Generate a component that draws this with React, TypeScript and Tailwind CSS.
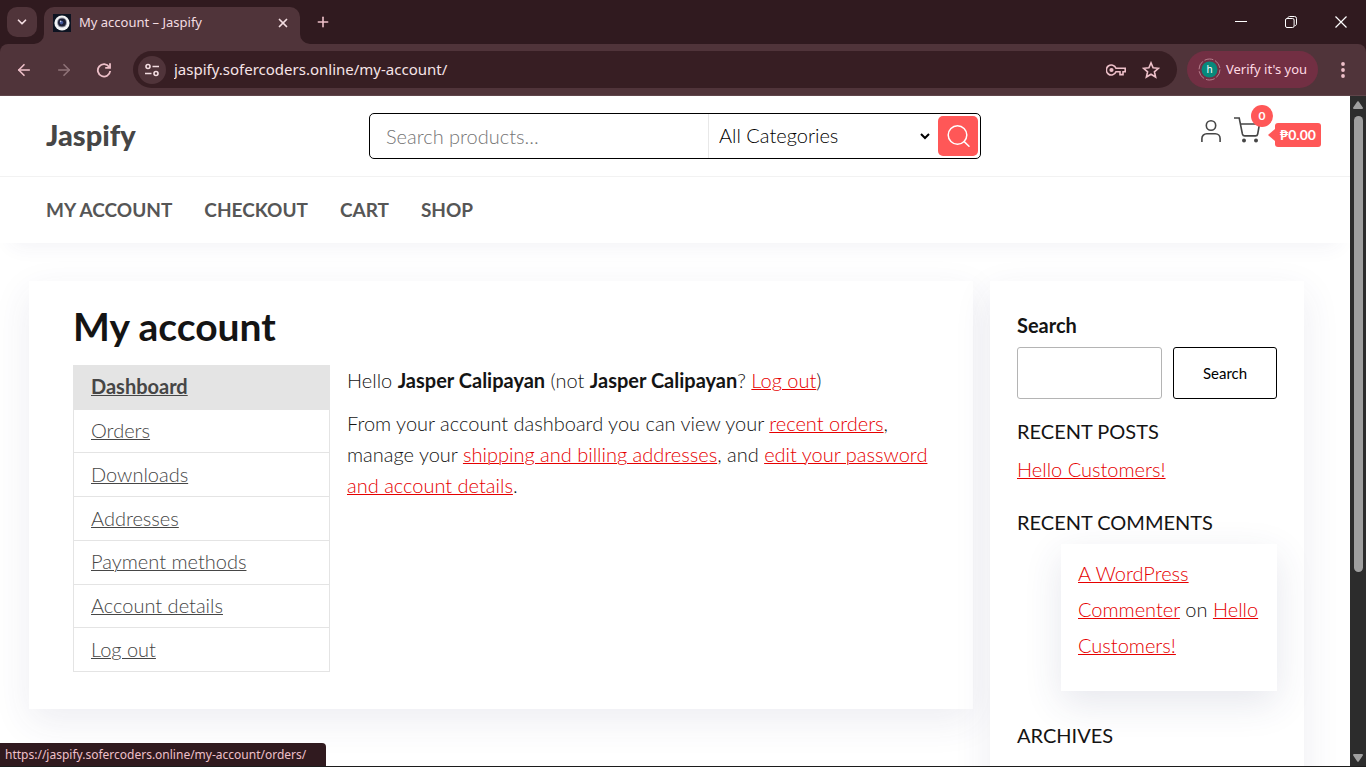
import { useState } from "react";
import { ArrowLeft, ArrowRight, ChevronDown, Plus, X } from "lucide-react";

const menu = ["My account", "Checkout", "Cart", "Shop"];

const accountLinks = [
  "Dashboard",
  "Orders",
  "Downloads",
  "Addresses",
  "Payment methods",
  "Account details",
  "Log out",
];

function TextLink({ children }: { children: string }) {
  return (
    <a href="#" className="text-[#e60000] underline decoration-1">
      {children}
    </a>
  );
}

function TabStrip() {
  return (
    <div className="flex h-11 items-center bg-[#301a1f] text-[#f3dde1]">
      <button aria-label="Search tabs" className="ml-[7px] flex size-[30px] items-center justify-center rounded-[10px] bg-[#50343a]">
        <ChevronDown className="size-[14px]" strokeWidth={3} />
      </button>
      <div className="relative ml-[7px] flex h-[37px] w-64 items-center self-end rounded-t-[10px] bg-[#50343a] pb-[5px] pl-[9px] pr-[10px]">
        <svg className="absolute -left-[10px] bottom-0 size-[10px]" viewBox="0 0 10 10">
          <path d="M10 0v10H0A10 10 0 0 0 10 0z" fill="#50343a" />
        </svg>
        <svg className="absolute -right-[10px] bottom-0 size-[10px]" viewBox="0 0 10 10">
          <path d="M0 0v10h10A10 10 0 0 1 0 0z" fill="#50343a" />
        </svg>
        <svg className="size-[18px]" viewBox="0 0 18 18">
          <rect width="18" height="18" fill="#0d1321" />
          <circle cx="9" cy="9" r="7.6" fill="#f4f4f6" />
          <circle cx="9" cy="8.6" r="5" fill="#9a9cab" />
          <circle cx="9" cy="8.6" r="4" fill="#1b1d33" />
          <circle cx="8.5" cy="8.6" r="1.8" fill="#42559a" />
          <circle cx="7.6" cy="7.4" r="0.8" fill="#c3cbe8" />
        </svg>
        <span className="ml-2 text-[13px]">My account – Jaspify</span>
        <button aria-label="Close tab" className="ml-auto">
          <X className="size-[14px]" strokeWidth={3} />
        </button>
      </div>
      <button aria-label="New tab" className="ml-[15px] text-[#eec0c9]">
        <Plus className="size-4" strokeWidth={2.4} />
      </button>
      <div className="ml-auto flex items-center text-white">
        <button aria-label="Minimize" className="flex w-[50px] justify-center">
          <svg className="size-3" viewBox="0 0 12 12">
            <path d="M0 5.5h12" stroke="currentColor" />
          </svg>
        </button>
        <button aria-label="Restore" className="flex w-[50px] justify-center">
          <svg className="size-3" viewBox="0 0 12 12" fill="none" stroke="currentColor">
            <rect x="0.5" y="2.5" width="8.6" height="9" rx="1.5" />
            <path d="M2.8 2.3C3 1 3.6.5 4.6.5h4.9a2 2 0 0 1 2 2v5.4c0 1-.6 1.7-1.8 1.9" />
          </svg>
        </button>
        <button aria-label="Close" className="flex w-[50px] justify-center">
          <svg className="size-3" viewBox="0 0 12 12">
            <path d="M.5.5l11 11M11.5.5l-11 11" stroke="currentColor" strokeWidth="1.2" />
          </svg>
        </button>
      </div>
    </div>
  );
}

function Toolbar() {
  return (
    <div className="bg-[#301a1f]">
      <div className="flex h-[52px] items-center rounded-t-lg border-b border-[#5f454a] bg-[#50343a] pr-[21px] text-[#eec0c9]">
        <button aria-label="Back" className="ml-[15px]">
          <ArrowLeft className="size-[18px]" strokeWidth={2.2} />
        </button>
        <button aria-label="Forward" className="ml-[22px] text-[#8f7378]">
          <ArrowRight className="size-[18px]" strokeWidth={2.2} />
        </button>
        <button aria-label="Reload" className="ml-[23px]">
          <svg className="size-4" viewBox="0 0 16 16" fill="none" stroke="currentColor" strokeWidth="1.8">
            <path d="M13.2 4.9A6.2 6.2 0 1 0 14.2 9" />
            <path d="M14 1.2v4.6H9.2" />
          </svg>
        </button>
        <div className="ml-[21px] flex h-[37px] min-w-0 flex-1 items-center rounded-full bg-[#371e23] pr-[17px] pl-[5px]">
          <button aria-label="Site information" className="flex size-7 items-center justify-center rounded-full bg-[#50343a] text-[#f3dde1]">
            <svg className="size-4" viewBox="0 0 16 16" fill="none" stroke="currentColor" strokeWidth="1.6">
              <circle cx="4" cy="4.5" r="2" />
              <path d="M8.5 4.5H15M1 11.5h6.5" />
              <circle cx="12" cy="11.5" r="2" />
            </svg>
          </button>
          <input
            aria-label="Address"
            defaultValue="jaspify.sofercoders.online/my-account/"
            className="ml-2 min-w-0 flex-1 bg-transparent text-[15px] text-[#f6e4e7] outline-none"
          />
          <button aria-label="Passwords">
            <svg className="h-3 w-5" viewBox="0 0 20 12" fill="none" stroke="currentColor" strokeWidth="1.6">
              <path d="M10 4.2A5 5 0 1 0 10 7.8h4v2.8h3V7.8h2.2V4.2z" />
              <circle cx="5.5" cy="6" r="2.1" fill="currentColor" stroke="none" />
            </svg>
          </button>
          <button aria-label="Bookmark" className="ml-4">
            <svg className="size-[18px]" viewBox="0 0 18 18" fill="none" stroke="currentColor" strokeWidth="1.6">
              <path d="M9 1.9l2.1 4.9 5.3.5-4 3.5 1.2 5.2L9 13.2 4.4 16l1.2-5.2-4-3.5 5.3-.5z" />
            </svg>
          </button>
        </div>
        <button className="ml-[10px] flex h-[37px] w-[131px] items-center rounded-full bg-[#722f43] pl-[11px] text-[13px] text-[#ffd9e2]">
          <span className="relative flex size-[23px] items-center justify-center">
            <svg className="absolute size-[23px]" viewBox="0 0 23 23">
              <circle cx="11.5" cy="11.5" r="10.5" fill="none" stroke="#b8808f" strokeDasharray="9 2" />
              <circle cx="11.5" cy="11.5" r="8" fill="#07897b" />
            </svg>
            <span className="relative text-[10px] text-white">h</span>
          </span>
          <span className="ml-[5px] whitespace-nowrap">Verify it's you</span>
        </button>
        <button aria-label="Menu" className="ml-[23px]">
          <svg className="h-4 w-1" viewBox="0 0 4 16" fill="currentColor">
            <circle cx="2" cy="2" r="1.9" />
            <circle cx="2" cy="8" r="1.9" />
            <circle cx="2" cy="14" r="1.9" />
          </svg>
        </button>
      </div>
    </div>
  );
}

function SiteHeader() {
  const [query, setQuery] = useState("");

  return (
    <header className="shadow-[0_14px_20px_-12px_rgba(50,60,110,0.07)]">
      <div className="grid h-[81px] grid-cols-[1fr_minmax(0,612px)_1fr] border-b border-[#f2f2f2] pt-[17px]">
        <a href="#" className="pl-[46px] text-[29px] leading-[44px] font-black text-[#464646]">
          Jaspify
        </a>
        <form className="flex h-[46px] items-center rounded-[5px] border border-black pr-0.5" onSubmit={(e) => e.preventDefault()}>
          <input
            aria-label="Search products"
            placeholder="Search products..."
            value={query}
            onChange={(e) => setQuery(e.target.value)}
            className="h-full min-w-0 flex-1 pl-4 text-xl font-light outline-none placeholder:text-[#757575]"
          />
          <select aria-label="Category" className="h-full w-[225px] border-l border-[#e8e8e8] bg-white pb-0.5 pl-[6px] text-xl font-light text-black outline-none">
            <option>All Categories</option>
          </select>
          <button aria-label="Search" className="ml-[5px] flex size-10 items-center justify-center rounded-[5px] bg-[#ff5757] text-white">
            <svg className="size-6" viewBox="0 0 24 24" fill="none" stroke="currentColor" strokeWidth="1.5">
              <circle cx="11.5" cy="11" r="9.3" />
              <path d="M18.2 17.6l4.8 4.6" strokeLinecap="round" />
            </svg>
          </button>
        </form>
        <div className="flex h-[26px] items-center justify-end pr-[29px] text-[#464646]">
          <a href="#" aria-label="My account">
            <svg className="mt-[9px] h-[22px] w-5" viewBox="0 0 20 22" fill="none" stroke="currentColor" strokeWidth="1.6">
              <circle cx="10" cy="5.5" r="4.7" />
              <path d="M.9 22v-3.5a4.8 4.8 0 0 1 4.8-4.8h8.6a4.8 4.8 0 0 1 4.8 4.8V22" />
            </svg>
          </a>
          <a href="#" aria-label="Cart" className="relative ml-[13px]">
            <svg className="mt-2 h-[26px] w-[27px]" viewBox="0 0 27 26" fill="none" stroke="currentColor" strokeWidth="1.6">
              <path d="M0 1h5.2l3.2 16c.3 1.2 1 1.9 2.3 1.9h10.8c1.2 0 2-.7 2.2-1.9L25.500 7H6.4" />
              <circle cx="10" cy="23.5" r="2" fill="currentColor" stroke="none" />
              <circle cx="22" cy="23.5" r="2" fill="currentColor" stroke="none" />
            </svg>
            <span className="absolute -top-1 left-[17px] flex size-[22px] items-center justify-center rounded-full bg-[#ff5757] text-xs font-bold text-white">
              0
            </span>
          </a>
          <span className="relative ml-[14px] mt-[17px] flex h-6 w-[46px] items-center justify-center rounded-[3px] bg-[#ff5757] text-sm font-bold text-white">
            <svg className="absolute -left-[7px] top-[6px] h-3 w-[7px]" viewBox="0 0 7 12" fill="#ff5757">
              <path d="M7 0v12L0 6z" />
            </svg>
            ₱0.00
          </span>
        </div>
      </div>
      <nav className="flex h-[66px] items-center gap-8 pl-[46px] text-[19px] font-bold text-[#565656] uppercase">
        {menu.map((item) => (
          <a key={item} href="#">
            {item}
          </a>
        ))}
      </nav>
    </header>
  );
}

function Account() {
  return (
    <main className="min-w-0 flex-1 bg-white px-11 pt-[21px] pb-[37px] shadow-[0_12px_36px_rgba(50,60,110,0.09)]">
      <h1 className="text-[39px] leading-[48px] font-bold text-[#141414]">My account</h1>
      <div className="mt-[15px] flex gap-[17px]">
        <nav className="w-[257px] shrink-0">
          <ul className="flex h-[307px] flex-col border border-[#e4e4e4] text-xl text-[#464646]">
            {accountLinks.map((item, i) => (
              <li
                key={item}
                className={
                  i === 0
                    ? "flex flex-1 items-center bg-[#e4e4e4] pb-0.5 pl-[17px] font-bold"
                    : "flex flex-1 items-center border-t border-[#e4e4e4] pb-0.5 pl-[17px] font-light"
                }
              >
                <a href="#" className="underline decoration-1">
                  {item}
                </a>
              </li>
            ))}
          </ul>
        </nav>
        <div className="text-xl leading-[31px] font-light text-[#141414]">
          <p>
            Hello <strong className="font-bold">Jasper Calipayan</strong> (not{" "}
            <strong className="font-bold">Jasper Calipayan</strong>? <TextLink>Log out</TextLink>)
          </p>
          <p className="mt-3">
            From your account dashboard you can view your <TextLink>recent orders</TextLink>, manage your{" "}
            <TextLink>shipping and billing addresses</TextLink>, and{" "}
            <TextLink>edit your password and account details</TextLink>.
          </p>
        </div>
      </div>
    </main>
  );
}

function Sidebar() {
  return (
    <aside className="w-[314px] shrink-0 bg-white px-[27px] pt-7 pb-11 text-xl font-light text-[#141414] shadow-[0_12px_36px_rgba(50,60,110,0.09)]">
      <form onSubmit={(e) => e.preventDefault()}>
        <label htmlFor="sidebar-search" className="block leading-8 font-bold">
          Search
        </label>
        <div className="mt-[6px] flex gap-[11px]">
          <input id="sidebar-search" className="h-[52px] min-w-0 flex-1 rounded-[3px] border border-[#b4b4b4] px-2 outline-none" />
          <button className="h-[52px] w-[104px] rounded-[3px] border border-black text-[15px] font-normal text-black">Search</button>
        </div>
      </form>
      <h2 className="mt-4 leading-8 font-normal uppercase">Recent Posts</h2>
      <p className="mt-[6px] leading-8">
        <TextLink>Hello Customers!</TextLink>
      </p>
      <h2 className="mt-[21px] leading-8 font-normal uppercase">Recent Comments</h2>
      <p className="mt-[6px] ml-11 bg-white px-[17px] pt-[11px] pb-7 leading-9 shadow-[0_12px_36px_rgba(50,60,110,0.12)]">
        <TextLink>A WordPress Commenter</TextLink> on <TextLink>Hello Customers!</TextLink>
      </p>
      <h2 className="mt-7 leading-8 font-normal uppercase">Archives</h2>
    </aside>
  );
}

function Scrollbar() {
  return (
    <div className="flex w-4 shrink-0 flex-col items-center bg-[#2c2c2c] pt-[5px] pb-1">
      <svg className="h-2 w-[10px]" viewBox="0 0 10 8" fill="#9f9f9f">
        <path d="M4.3.6a.9.9 0 0 1 1.4 0l4.1 6A.9.9 0 0 1 9.1 8H.9a.9.9 0 0 1-.7-1.4z" />
      </svg>
      <div className="mt-[7px] h-[69%] w-[9px] rounded-full bg-[#9f9f9f]" />
      <svg className="mt-auto h-2 w-[10px]" viewBox="0 0 10 8" fill="#9f9f9f">
        <path d="M4.3 7.4a.9.9 0 0 0 1.4 0l4.1-6A.9.9 0 0 0 9.1 0H.9a.9.9 0 0 0-.7 1.4z" />
      </svg>
    </div>
  );
}

export default function App() {
  return (
    <div className="relative flex h-screen flex-col overflow-hidden border-b border-[#1c1c1c] bg-white">
      <div className="shrink-0 font-['Noto_Sans',sans-serif]">
        <TabStrip />
        <Toolbar />
      </div>
      <div className="flex min-h-0 flex-1">
        <div className="min-w-0 flex-1 overflow-hidden font-['Lato',sans-serif]">
          <SiteHeader />
          <div className="flex items-start gap-[17px] pt-[38px] pr-[46px] pl-[29px]">
            <Account />
            <Sidebar />
          </div>
        </div>
        <Scrollbar />
      </div>
      <div className="absolute bottom-0 left-0 flex h-[23px] w-[326px] items-center rounded-tr-[4px] bg-[#301a1f] pl-[5px] font-['Noto_Sans',sans-serif] text-xs whitespace-nowrap text-[#eec0c9]">
        https://jaspify.sofercoders.online/my-account/orders/
      </div>
    </div>
  );
}
